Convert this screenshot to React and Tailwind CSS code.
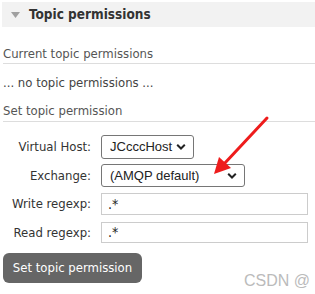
function Chevron() {
  return (
    <svg width="10" height="7" viewBox="0 0 10 7" className="pointer-events-none absolute right-[8px] top-1/2 -translate-y-1/2">
      <path d="M1.2 1.3 L5 5 L8.8 1.3" fill="none" stroke="#222" strokeWidth="2" />
    </svg>
  );
}

function Row({ label, children, className }) {
  return (
    <div className={`flex items-center ${className}`}>
      <label className="w-[88px] shrink-0 text-right text-[13px] leading-[16px] text-[#333]">{label}</label>
      <div className="relative ml-[10px] flex">{children}</div>
    </div>
  );
}

export default function App() {
  return (
    <div
      className="relative h-[294px] w-[315px] overflow-hidden bg-white text-[#444]"
      style={{ fontFamily: '"DejaVu Sans Condensed", "DejaVu Sans", sans-serif' }}
    >
      {/* section header */}
      <div className="ml-[2px] mt-[2px] flex h-[25px] items-center bg-[#f2f2f2]">
        <svg width="9" height="6" viewBox="0 0 9 6" className="ml-[9px] mt-[1px]">
          <path d="M0 0 H9 L4.5 6 Z" fill="#a0a0a0" />
        </svg>
        <span className="ml-[9px] text-[13.5px] font-bold text-[#333]">Topic permissions</span>
      </div>

      <div className="pl-[3px]">
        <div className="mt-[19px] border-b border-[#ddd] pb-[1px] text-[13px] leading-[16px] text-[#555]">
          Current topic permissions
        </div>
        <div className="mt-[11px] text-[13px] leading-[16px] text-[#444]">... no topic permissions ...</div>
        <div className="mt-[12px] border-b border-[#ddd] pb-[2px] text-[13px] leading-[16px] text-[#555]">
          Set topic permission
        </div>

        <form className="mt-[13px] flex flex-col items-start">
          <Row label="Virtual Host:">
            <select
              className="block h-[24px] w-[93px] appearance-none rounded-[3px] border border-[#767676] bg-white pl-[8px] text-[13px] text-[#222]"
              style={{ fontFamily: '"Liberation Sans", Arial, sans-serif' }}
              defaultValue="JCcccHost"
            >
              <option>JCcccHost</option>
            </select>
            <Chevron />
          </Row>
          <Row label="Exchange:" className="mt-[5px]">
            <select
              className="block h-[23px] w-[144px] appearance-none rounded-[3px] border border-[#767676] bg-white pl-[8px] text-[13px] text-[#222]"
              style={{ fontFamily: '"Liberation Sans", Arial, sans-serif' }}
              defaultValue="(AMQP default)"
            >
              <option>(AMQP default)</option>
            </select>
            <Chevron />
          </Row>
          <Row label="Write regexp:" className="mt-[6px]">
            <input
              type="text"
              defaultValue=".*"
              className="block h-[22px] w-[207px] border border-[#ccc] bg-white pl-[6px] text-[14px] text-[#222] outline-none"
            />
          </Row>
          <Row label="Read regexp:" className="mt-[7px]">
            <input
              type="text"
              defaultValue=".*"
              className="block h-[21px] w-[207px] border border-[#ccc] bg-white pl-[6px] text-[14px] text-[#222] outline-none"
            />
          </Row>
          <button
            type="button"
            className="mt-[10px] block h-[30px] w-[139px] rounded-[6px] bg-[#666] text-[13px] text-white"
          >
            Set topic permission
          </button>
        </form>
      </div>

      {/* red annotation arrow */}
      <svg width="315" height="294" className="pointer-events-none absolute left-0 top-0">
        <line x1="267" y1="118" x2="224" y2="164" stroke="#ee1c1c" strokeWidth="3" strokeLinecap="round" />
        <path d="M214 174 L219 157 L231 168 Z" fill="#ee1c1c" />
      </svg>

      {/* watermark */}
      <div
        className="absolute left-[244px] top-[271px] whitespace-nowrap text-[16px] leading-[20px] text-[#bbb]"
        style={{ fontFamily: '"Liberation Sans", Arial, sans-serif' }}
      >
        CSDN @
      </div>
    </div>
  );
}
